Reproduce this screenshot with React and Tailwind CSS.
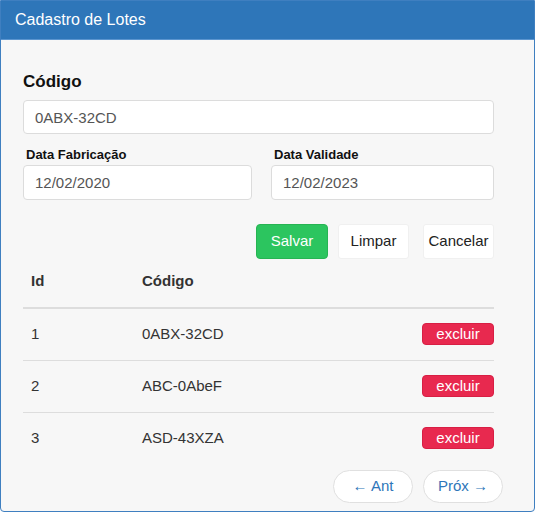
const lotes = [
  { id: 1, codigo: "0ABX-32CD" },
  { id: 2, codigo: "ABC-0AbeF" },
  { id: 3, codigo: "ASD-43XZA" },
];

export default function App() {
  return (
    <div className="w-[535px] h-[512px] font-['Liberation_Sans',Arial,sans-serif]">
      <div className="h-full flex flex-col border border-[#3f7fc0] rounded-b-[4px] bg-[#f7f7f7] overflow-hidden">
        <div className="h-[39px] shrink-0 bg-[#2e76b9] border-b border-[#5b95cf] flex items-center px-[14px]">
          <h1 className="text-white text-[16px] leading-none">Cadastro de Lotes</h1>
        </div>

        <div className="pl-[22px] pr-[40px] pt-[32px]">
          <label className="block text-[17px] font-bold text-[#111] leading-[20px]">Código</label>
          <input
            defaultValue="0ABX-32CD"
            className="mt-[8px] w-full h-[34px] rounded-[4px] border border-[#dcdcdc] bg-white px-[11px] text-[15px] text-[#555] outline-none"
          />

          <div className="mt-[13px] flex gap-[19px]">
            <div className="w-[229px]">
              <label className="block pl-[3px] text-[13px] font-bold text-[#111] leading-[16px]">Data Fabricação</label>
              <input
                defaultValue="12/02/2020"
                className="mt-[2px] w-full h-[35px] rounded-[4px] border border-[#dcdcdc] bg-white px-[11px] text-[15px] text-[#555] outline-none"
              />
            </div>
            <div className="flex-1">
              <label className="block pl-[3px] text-[13px] font-bold text-[#111] leading-[16px]">Data Validade</label>
              <input
                defaultValue="12/02/2023"
                className="mt-[2px] w-full h-[35px] rounded-[4px] border border-[#dcdcdc] bg-white px-[11px] text-[15px] text-[#555] outline-none"
              />
            </div>
          </div>

          <div className="mt-[24px] flex justify-end">
            <button className="w-[72px] h-[35px] rounded-[4px] border border-[#27b453] bg-[#2cc55f] text-white text-[15px]">
              Salvar
            </button>
            <button className="ml-[10px] w-[71px] h-[35px] rounded-[3px] border border-[#f0f0f0] bg-white text-[#222] text-[15px]">
              Limpar
            </button>
            <button className="ml-[14px] w-[71px] h-[35px] rounded-[3px] border border-[#f0f0f0] bg-white text-[#222] text-[15px]">
              Cancelar
            </button>
          </div>

          <table className="mt-[9px] w-full text-[15px] text-[#333]">
            <thead>
              <tr className="border-b-2 border-[#dddddd]">
                <th className="h-[40px] pl-[8px] text-left font-bold align-top pt-[2px] w-[119px]">Id</th>
                <th className="h-[40px] text-left font-bold align-top pt-[2px]">Código</th>
                <th className="h-[40px]"></th>
              </tr>
            </thead>
            <tbody>
              {lotes.map((l, i) => (
                <tr key={l.id} className={i < lotes.length - 1 ? "border-b border-[#dddddd]" : ""}>
                  <td className="h-[52px] pl-[8px]">{l.id}</td>
                  <td className="h-[52px]">{l.codigo}</td>
                  <td className="h-[52px] text-right">
                    <button className="w-[72px] h-[22px] rounded-[4px] border border-[#d81f44] bg-[#e8294f] text-white text-[15px] leading-none">
                      excluir
                    </button>
                  </td>
                </tr>
              ))}
            </tbody>
          </table>

          <div className="mt-[6px] -mr-[9px] flex justify-end gap-[10px]">
            <button className="w-[80px] h-[33px] rounded-full border border-[#e0e0e0] bg-white text-[#2e76b9] text-[15px]">
              ← Ant
            </button>
            <button className="w-[80px] h-[33px] rounded-full border border-[#e0e0e0] bg-white text-[#2e76b9] text-[15px]">
              Próx →
            </button>
          </div>
        </div>
      </div>
    </div>
  );
}
